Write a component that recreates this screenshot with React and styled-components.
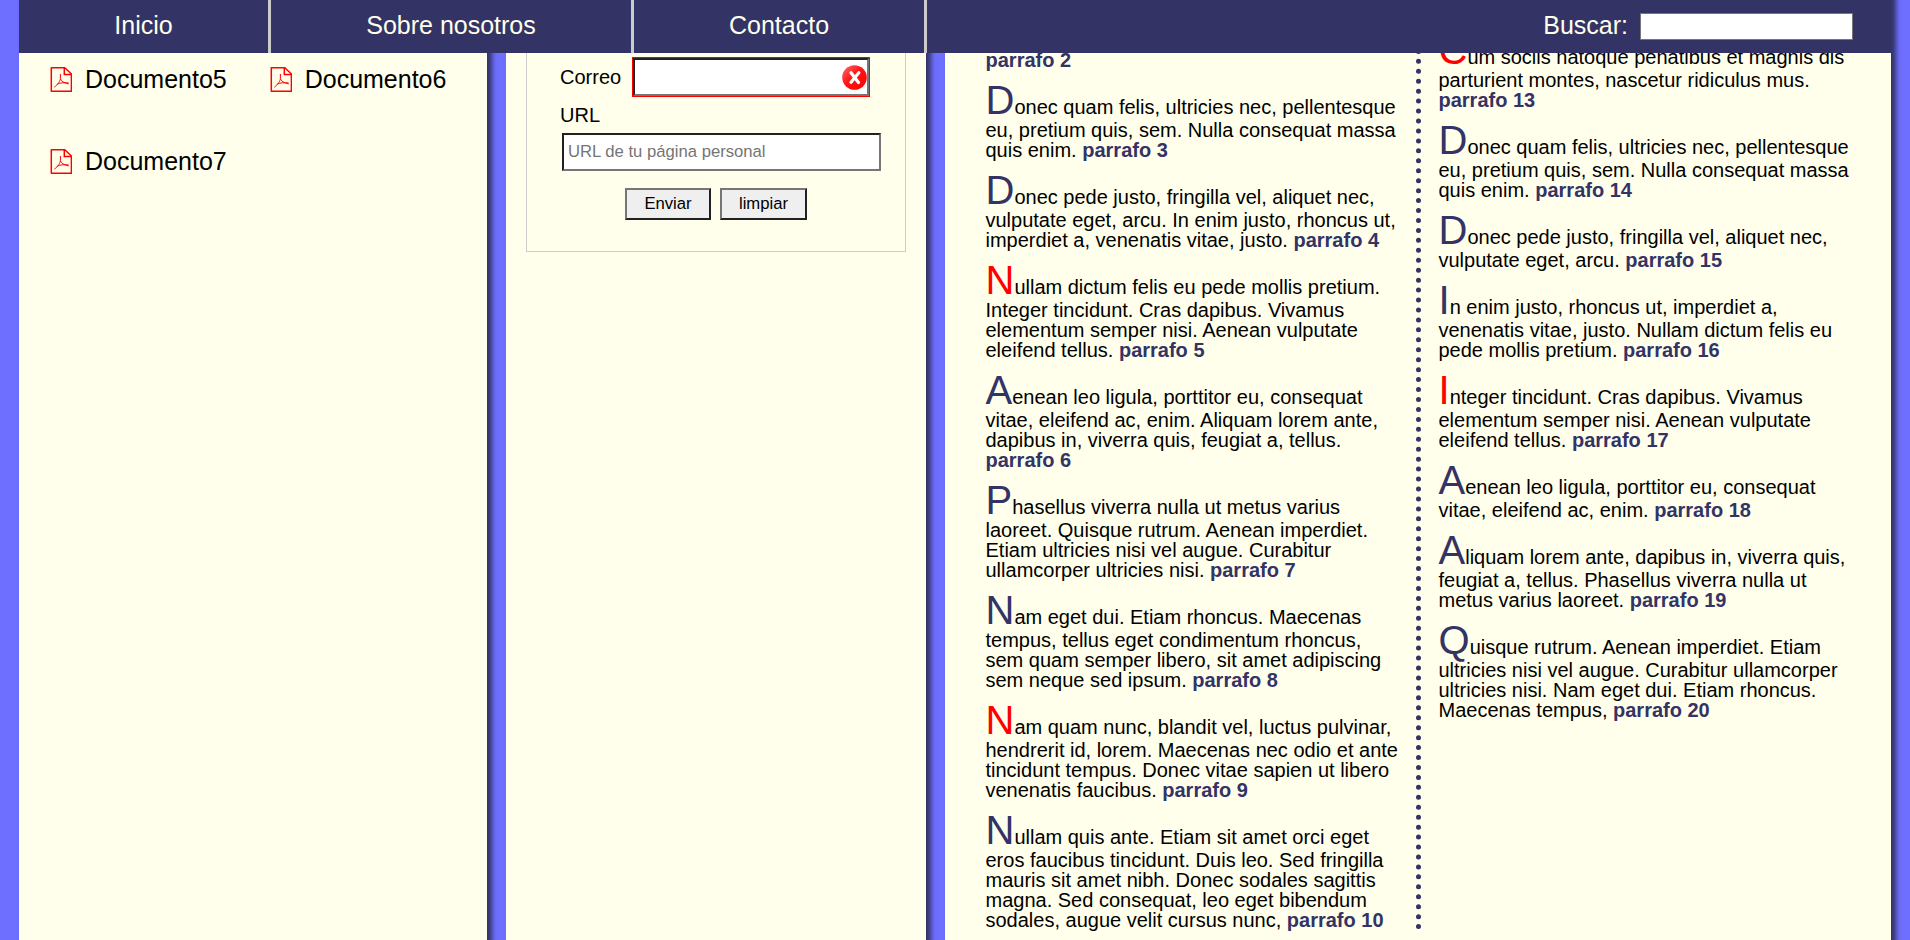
import React from "react";
import styled, { createGlobalStyle } from "styled-components";

const GlobalStyle = createGlobalStyle`
  * { box-sizing: border-box; }
  html, body { margin: 0; height: 940px; overflow: hidden; background: #6f6fff; }
  body { font-family: "Liberation Sans", Arial, sans-serif; font-size: 20px; line-height: 1; color: #000; }
`;

const Page = styled.div`
  display: flow-root;
  width: 1910px;
  height: 940px;
  padding: 0 19px;
  overflow: hidden;
`;

const Header = styled.header`
  position: fixed;
  top: 0;
  left: 19px;
  z-index: 2;
  display: flex;
  width: 1872px;
  height: 53px;
  background: #336;
  color: #ffffeb;
  font-size: 25px;
`;

const NavLink = styled.a`
  display: flex;
  align-items: center;
  justify-content: center;
  width: ${(p) => p.$width}px;
  padding-bottom: 2px;
  border-right: 3px solid #ccc;
`;

const Search = styled.label`
  display: flex;
  align-items: center;
  gap: 12px;
  margin-left: auto;
  padding-right: 38px;
  span { padding-bottom: 2px; }
`;

const SearchInput = styled.input`
  width: 213px;
  height: 27px;
  border: 1px solid #767676;
  background: #fff;
`;

const Panels = styled.main`
  display: grid;
  grid-template-columns: 468px 420px 946px;
  gap: 19px;
  height: 980px;
  margin-top: -20px;
`;

const Panel = styled.section`
  height: 980px;
  background: #ffffeb;
  box-shadow: 5px 0 5px #336;
`;

const DocumentPanel = styled(Panel)`
  display: grid;
  grid-template-columns: 219.7px 219.7px;
  grid-auto-rows: 82px;
  align-content: start;
  padding: 86px 0 0 31px;
`;

const DocumentItem = styled.a`
  display: flex;
  align-items: center;
  gap: 12.6px;
  height: 27px;
  font-size: 25px;
`;

const FormPanel = styled(Panel)`
  padding: 20px 20px 0;
`;

const Form = styled.form`
  width: 380px;
  height: 252px;
  padding: 57px 24px 0 33px;
  border: 1px solid #ccc;
  border-top: 0;
`;

const Field = styled.label`
  display: flex;
  align-items: center;
  gap: 12px;
  height: 40px;
`;

const FieldLabel = styled.label`
  display: block;
  margin: 8px 0 8px;
`;

const TextInput = styled.input`
  display: block;
  width: 319px;
  height: 38px;
  margin-left: 2px;
  padding: 1px 4px 1px;
  border: 2px solid;
  border-color: #212121 #767676 #767676 #212121;
  background: #fff;
  font: 16.67px "Liberation Sans", Arial, sans-serif;
  &::placeholder { color: #757575; opacity: 1; }
`;

const InvalidBox = styled.span`
  display: flex;
  align-items: center;
  justify-content: flex-end;
  width: 236px;
  height: 38px;
  border: 2px solid;
  border-color: #212121 #767676 #767676 #212121;
  background: #fff;
  box-shadow: 0 0 0 1px #f00;
`;

const Actions = styled.div`
  display: flex;
  gap: 9px;
  padding: 17px 0 0 65px;
`;

const Button = styled.button`
  width: ${(p) => p.$width}px;
  height: 32px;
  padding: 0;
  border: 2px solid;
  border-color: #767676 #212121 #212121 #767676;
  background: #efefef;
  color: #000;
  font: 16.67px "Liberation Sans", Arial, sans-serif;
`;

const Article = styled(Panel)`
  display: flex;
  align-items: flex-start;
  padding: 49px 0 0 40.5px;
`;

const TextColumn = styled.div`
  width: 430.5px;
  height: 901px;
  padding-top: 21px;
`;

const RuledColumn = styled(TextColumn)`
  width: 440px;
  padding: 1px 0 0 17.5px;
  border-left: 5px dotted #336;
`;

const Paragraph = styled.p`
  margin: 0 0 10px;
  white-space: nowrap;
  &::first-letter {
    font-size: ${(p) => (p.$continued ? 20 : 40)}px;
    color: ${(p) => (p.$red ? "#f00" : "#336")};
  }
  strong { color: #336; }
`;

const leftParagraphs = [
  { n: 2, lines: [""], continued: true },
  { n: 3, lines: ["Donec quam felis, ultricies nec, pellentesque", "eu, pretium quis, sem. Nulla consequat massa", "quis enim. "] },
  { n: 4, lines: ["Donec pede justo, fringilla vel, aliquet nec,", "vulputate eget, arcu. In enim justo, rhoncus ut,", "imperdiet a, venenatis vitae, justo. "] },
  { n: 5, red: true, lines: ["Nullam dictum felis eu pede mollis pretium.", "Integer tincidunt. Cras dapibus. Vivamus", "elementum semper nisi. Aenean vulputate", "eleifend tellus. "] },
  { n: 6, lines: ["Aenean leo ligula, porttitor eu, consequat", "vitae, eleifend ac, enim. Aliquam lorem ante,", "dapibus in, viverra quis, feugiat a, tellus.", ""] },
  { n: 7, lines: ["Phasellus viverra nulla ut metus varius", "laoreet. Quisque rutrum. Aenean imperdiet.", "Etiam ultricies nisi vel augue. Curabitur", "ullamcorper ultricies nisi. "] },
  { n: 8, lines: ["Nam eget dui. Etiam rhoncus. Maecenas", "tempus, tellus eget condimentum rhoncus,", "sem quam semper libero, sit amet adipiscing", "sem neque sed ipsum. "] },
  { n: 9, red: true, lines: ["Nam quam nunc, blandit vel, luctus pulvinar,", "hendrerit id, lorem. Maecenas nec odio et ante", "tincidunt tempus. Donec vitae sapien ut libero", "venenatis faucibus. "] },
  { n: 10, lines: ["Nullam quis ante. Etiam sit amet orci eget", "eros faucibus tincidunt. Duis leo. Sed fringilla", "mauris sit amet nibh. Donec sodales sagittis", "magna. Sed consequat, leo eget bibendum", "sodales, augue velit cursus nunc, "] },
];

const rightParagraphs = [
  { n: 13, red: true, lines: ["Cum sociis natoque penatibus et magnis dis", "parturient montes, nascetur ridiculus mus.", ""] },
  { n: 14, lines: ["Donec quam felis, ultricies nec, pellentesque", "eu, pretium quis, sem. Nulla consequat massa", "quis enim. "] },
  { n: 15, lines: ["Donec pede justo, fringilla vel, aliquet nec,", "vulputate eget, arcu. "] },
  { n: 16, lines: ["In enim justo, rhoncus ut, imperdiet a,", "venenatis vitae, justo. Nullam dictum felis eu", "pede mollis pretium. "] },
  { n: 17, red: true, lines: ["Integer tincidunt. Cras dapibus. Vivamus", "elementum semper nisi. Aenean vulputate", "eleifend tellus. "] },
  { n: 18, lines: ["Aenean leo ligula, porttitor eu, consequat", "vitae, eleifend ac, enim. "] },
  { n: 19, lines: ["Aliquam lorem ante, dapibus in, viverra quis,", "feugiat a, tellus. Phasellus viverra nulla ut", "metus varius laoreet. "] },
  { n: 20, lines: ["Quisque rutrum. Aenean imperdiet. Etiam", "ultricies nisi vel augue. Curabitur ullamcorper", "ultricies nisi. Nam eget dui. Etiam rhoncus.", "Maecenas tempus, "] },
];

const renderParagraph = ({ n, lines, red, continued }) => (
  <Paragraph key={n} $red={red} $continued={continued}>
    {lines.map((line, i) => (
      <React.Fragment key={i}>
        {i > 0 && <br />}
        {line}
      </React.Fragment>
    ))}
    <strong>parrafo {n}</strong>
  </Paragraph>
);

const PdfIcon = () => (
  <svg width="22.4" height="25" viewBox="0 0 22.4 25" fill="none" stroke="#f00">
    <path d="M1.3 .8H14.8L21.4 7V24.2H1.3Z" strokeWidth="1.5" strokeLinejoin="round" />
    <path d="M14.3 1V7.5H21.4" strokeWidth="1.5" />
    <path d="M10.4 7.4V11.5C10.4 13.5 8.2 17.4 4.6 20M10.6 12C11.3 14 13.4 15.9 18.4 16.8M7.8 16.9C10 15.9 14 15.3 18.2 15.9" strokeWidth="1" strokeLinecap="round" />
  </svg>
);

const ErrorIcon = () => (
  <svg width="25" height="25" viewBox="0 0 25 25">
    <defs>
      <linearGradient id="errorShine" x1="0" y1="0" x2="1" y2="1">
        <stop offset="0" stopColor="#ff7070" />
        <stop offset=".45" stopColor="#ff1515" />
        <stop offset="1" stopColor="#f00" />
      </linearGradient>
    </defs>
    <circle cx="12.5" cy="12.5" r="12.3" fill="url(#errorShine)" />
    <path d="M9 7.8L16.5 17.5M16.8 7.8L9 17.3" stroke="#fff" strokeWidth="3.2" strokeLinecap="round" />
  </svg>
);

export default function App() {
  return (
    <Page>
      <GlobalStyle />
      <Header>
        <NavLink $width={252}>Inicio</NavLink>
        <NavLink $width={363}>Sobre nosotros</NavLink>
        <NavLink $width={293}>Contacto</NavLink>
        <Search>
          <span>Buscar:</span>
          <SearchInput />
        </Search>
      </Header>
      <Panels>
        <DocumentPanel>
          {[5, 6, 7].map((n) => (
            <DocumentItem key={n}>
              <PdfIcon />
              Documento{n}
            </DocumentItem>
          ))}
        </DocumentPanel>
        <FormPanel>
          <Form>
            <Field>
              Correo
              <InvalidBox>
                <ErrorIcon />
              </InvalidBox>
            </Field>
            <FieldLabel>URL</FieldLabel>
            <TextInput placeholder="URL de tu página personal" />
            <Actions>
              <Button type="button" $width={86}>Enviar</Button>
              <Button type="button" $width={87}>limpiar</Button>
            </Actions>
          </Form>
        </FormPanel>
        <Article>
          <TextColumn>{leftParagraphs.map(renderParagraph)}</TextColumn>
          <RuledColumn>{rightParagraphs.map(renderParagraph)}</RuledColumn>
        </Article>
      </Panels>
    </Page>
  );
}
